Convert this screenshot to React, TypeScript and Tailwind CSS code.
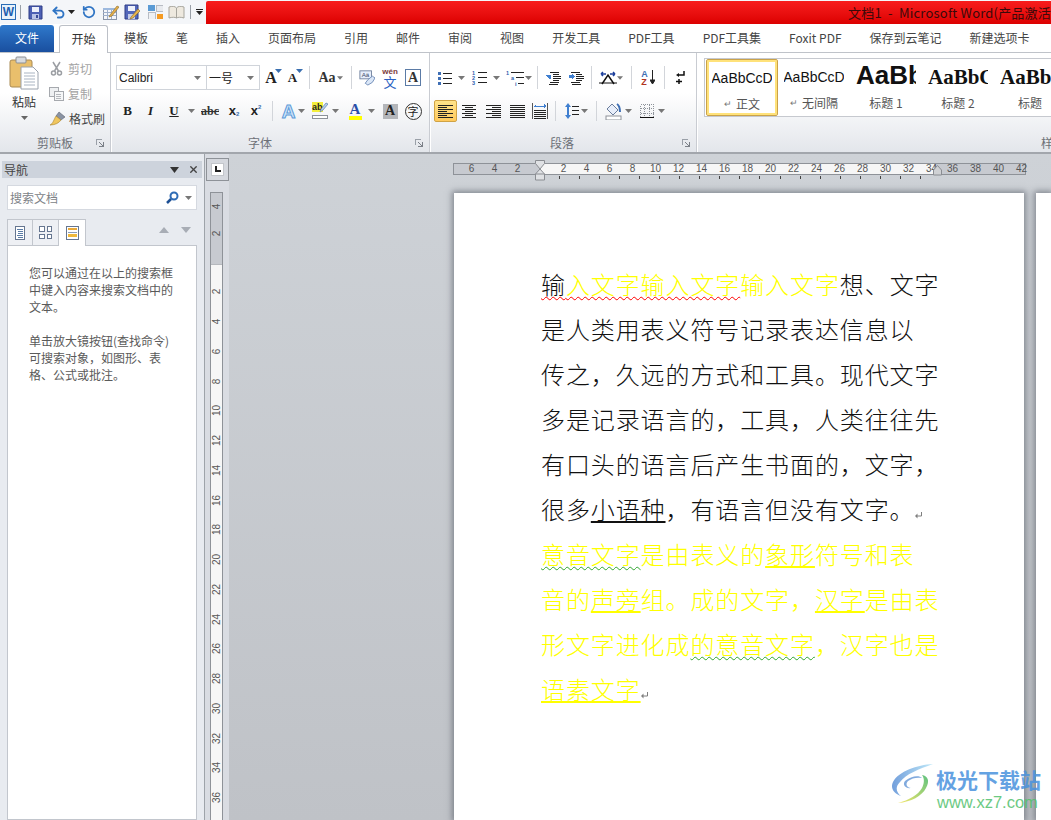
import React from 'react';
import { Undo2, RotateCcw, X } from 'lucide-react';

const CJK = "font-['Noto_Sans_CJK_SC','Liberation_Sans',sans-serif]";

const Caret = ({ c = '#666' }: { c?: string }) => (
  <svg width="7" height="4" viewBox="0 0 7 4"><path d="M0 0h7L3.5 4z" fill={c} /></svg>
);
const C = ({ w, children, className = '' }: { w: number; children?: React.ReactNode; className?: string }) => (
  <div style={{ width: w }} className={`flex h-full shrink-0 items-center justify-center ${className}`}>{children}</div>
);
const Sp = ({ w }: { w: number }) => <div style={{ width: w }} className="shrink-0" />;
const Sep = () => <div className="my-[1px] w-px shrink-0 bg-[#d2d5da]" />;

const Lines = ({ rows, c = '#222', w = 16, h = 15 }: { rows: number[][]; c?: string; w?: number; h?: number }) => (
  <svg width={w} height={h} viewBox={`0 0 ${w} ${h}`} shapeRendering="crispEdges">
    {rows.map((r, i) => <rect key={i} x={r[0]} y={r[1]} width={r[2]} height={1} fill={c} />)}
  </svg>
);

const Group = ({ w, label, children, labelClass = '' }: { w?: number; label: string; children: React.ReactNode; labelClass?: string }) => (
  <div style={w ? { width: w } : undefined} className="flex h-full shrink-0 flex-col border-r border-[#c9ccd2] shadow-[1px_0_0_#fff]">
    <div className="min-h-0 flex-1">{children}</div>
    <div className="flex h-[20px] items-center px-[6px] pt-[2px]">
      <div className={`flex-1 text-center text-[12px] leading-none text-[#6d7178] ${labelClass}`}>{label}</div>
      <svg width="8" height="8" viewBox="0 0 8 8" shapeRendering="crispEdges">
        <path d="M0 0h6v1H1v5H0z" fill="#9aa0a8" /><path d="M3 3h1v1h1v1h1v1h1V3h1v5H3V7h3V6H5V5H4V4H3z" fill="#7b8088" />
      </svg>
    </div>
  </div>
);

const QAT = () => (
  <div className="flex h-[24px] items-center bg-[#f4f6f9]">
    <Sp w={1} />
    <C w={15}>
      <div className="flex h-[16px] w-[15px] items-center justify-center border border-[#2a6cb6] bg-[#e8f2fb] font-['Liberation_Sans'] text-[12px] font-bold leading-none text-[#1e5fb0]">W</div>
    </C>
    <Sp w={4} /><div className="h-[14px] w-px bg-[#9aa0a8]" /><Sp w={7} />
    <C w={15}>
      <svg width="15" height="15" viewBox="0 0 15 15"><path d="M1 1h13v13H1z" fill="#4d60b4" stroke="#2f3d86" /><rect x="4" y="2" width="7" height="5" fill="#eef1fb" /><rect x="4" y="9" width="7" height="5" fill="#b9c3e6" /><rect x="8" y="10" width="2" height="3" fill="#3a4a96" /></svg>
    </C>
    <Sp w={7} />
    <C w={16}><Undo2 size={15} strokeWidth={3} color="#2f74c4" /></C>
    <C w={10}><Caret c="#222" /></C>
    <Sp w={5} />
    <C w={15}><RotateCcw size={14} strokeWidth={3} color="#2f74c4" /></C>
    <Sp w={6} />
    <C w={17}>
      <svg width="17" height="16" viewBox="0 0 17 16" shapeRendering="crispEdges"><rect x="1" y="4" width="13" height="11" fill="#f5f6fa" stroke="#8b95a8" /><path d="M1 8h13M1 11h13M5 4v11M9 4v11" stroke="#9fb0cc" /><rect x="1" y="4" width="13" height="2" fill="#9db9de" /><path d="M8 11l7-9 2 1-7 9-3 1z" fill="#e6b04a" stroke="#8a6a2a" strokeWidth=".6" shapeRendering="auto" /></svg>
    </C>
    <Sp w={5} />
    <C w={17}>
      <svg width="17" height="16" viewBox="0 0 17 16"><path d="M1 1h13v14H1z" fill="#5468ba" stroke="#2f3d86" /><rect x="4" y="2" width="7" height="5" fill="#eef1fb" /><rect x="4" y="10" width="7" height="5" fill="#c5cde8" /><path d="M7 13l7-8 2 2-7 7-3 1z" fill="#e8b44c" stroke="#8a6a2a" strokeWidth=".6" /></svg>
    </C>
    <Sp w={6} />
    <C w={16}>
      <svg width="15" height="14" viewBox="0 0 15 14" shapeRendering="crispEdges"><rect x="0" y="0" width="7" height="6" fill="#5b9bd5" /><rect x="8" y="0" width="7" height="6" fill="#e8eaee" stroke="#b8bcc4" /><rect x="0" y="7" width="7" height="7" fill="#eef0f3" stroke="#b8bcc4" /><rect x="9" y="9" width="6" height="5" fill="#f59b23" /></svg>
    </C>
    <Sp w={5} />
    <C w={17}>
      <svg width="17" height="13" viewBox="0 0 17 13"><path d="M1 1c3-1 6-1 7.500 1C10 0 13 0 16 1v11c-3-1-6-1-7.500 0C7 11 4 11 1 12z" fill="#eee9df" stroke="#a7a59d" /><path d="M8.500 2v10" stroke="#a7a59d" /></svg>
    </C>
    <Sp w={5} /><div className="h-[14px] w-px bg-[#9aa0a8]" /><Sp w={4} />
    <C w={8}><div className="flex flex-col items-center gap-[1px]"><div className="h-px w-[7px] bg-[#222]" /><Caret c="#222" /></div></C>
    <Sp w={3} />
    <div className="mt-px flex h-[23px] min-w-0 flex-1 items-center justify-end overflow-hidden rounded-tl-[2px] bg-gradient-to-b from-[#f81c1c] to-[#dc0000]">
      <div className={`w-[203px] shrink-0 whitespace-pre text-[13px] leading-none tracking-[0.2px] text-[#3a0a0a] ${CJK}`}>文档1  -  Microsoft Word(产品激活失败)</div>
    </div>
  </div>
);

const tabs = ['模板', '笔', '插入', '页面布局', '引用', '邮件', '审阅', '视图', '开发工具', 'PDF工具', 'PDF工具集', 'Foxit PDF', '保存到云笔记', '新建选项卡'];
const Tabs = () => (
  <div className={`flex h-[29px] items-end border-b border-[#bfc3c9] bg-white text-[12px] text-[#444] ${CJK}`}>
    <div className="flex h-[27px] w-[54px] items-center justify-center rounded-t-[3px] bg-gradient-to-b from-[#2f79cc] to-[#1a4f9f] pb-[2px] text-white">文件</div>
    <div className="ml-[5px] -mb-px flex h-[28px] w-[49px] items-center justify-center rounded-t-[3px] border border-b-0 border-[#bcc0c7] bg-white pb-[2px] text-[#333]">开始</div>
    <div className="flex h-full items-center pb-px">
      <Sp w={2} />
      {tabs.map((t) => <div key={t} className="whitespace-nowrap px-[14px]">{t}</div>)}
    </div>
  </div>
);

const Clipboard = () => (
  <div className={`flex h-full pt-[3px] text-[12px] ${CJK}`}>
    <div className="flex w-[47px] flex-col items-center pl-[1px] text-[#333]">
      <svg width="30" height="34" viewBox="0 0 30 34">
        <rect x="1" y="4" width="22" height="27" rx="2" fill="#e9bf6c" stroke="#a98a53" />
        <rect x="7" y="1" width="10" height="6" rx="1" fill="#d8dbdf" stroke="#8c8f94" />
        <path d="M12 11h12l5 5v17H12z" fill="#fff" stroke="#9aa2ad" />
        <path d="M15 17h11M15 20h11M15 23h11M15 26h11M15 29h11" stroke="#a9b4c2" />
      </svg>
      <div className="mt-[4px] leading-[16px]">粘贴</div>
      <div className="mt-[6px]"><Caret /></div>
    </div>
    <div className="flex flex-col pl-[2px]">
      <div className="flex h-[25px] items-center gap-[4px] text-[#a3a3a3]">
        <svg width="15" height="15" viewBox="0 0 15 15" fill="none" stroke="#9b9ea3" strokeWidth="1.500"><circle cx="4.500" cy="12" r="2" /><circle cx="10.500" cy="12" r="2" /><path d="M5.500 10L11 1M9.500 10L4 1" /></svg>
        <span>剪切</span>
      </div>
      <div className="flex h-[25px] items-center gap-[4px] text-[#a3a3a3]">
        <svg width="15" height="14" viewBox="0 0 15 14" shapeRendering="crispEdges"><rect x="0" y="0" width="9" height="9" fill="#eef0f2" stroke="#a6a9ae" /><rect x="5" y="4" width="9" height="9" fill="#f6f7f8" stroke="#a6a9ae" /><path d="M7 7h5M7 9h5M7 11h5" stroke="#b5b8bd" /></svg>
        <span>复制</span>
      </div>
      <div className="flex h-[25px] items-center gap-[3px] text-[#444]">
        <svg width="17" height="15" viewBox="0 0 17 15"><path d="M10 1l6 5-4 3-5-4z" fill="#8a93a3" stroke="#5a6270" strokeWidth=".6" /><path d="M7 5l5 4c-2 3-6 5-11 5 3-1 4-6 6-9z" fill="#f0c65e" stroke="#a68230" strokeWidth=".6" /></svg>
        <span>格式刷</span>
      </div>
    </div>
  </div>
);

const Serif = "font-['Liberation_Serif',serif]";
const FontGroup = () => (
  <div className="flex h-full flex-col pt-[12px]">
    <div className="flex h-[25px] pl-[5px]">
      <div className="flex h-full w-[91px] items-center justify-between border border-[#d0d4da] bg-white pl-[2px] pr-[5px] font-['Liberation_Sans'] text-[12px] text-[#222]">Calibri<Caret c="#777" /></div>
      <div className={`-ml-px flex h-full w-[54px] items-center justify-between border border-[#d0d4da] bg-white pl-[2px] pr-[5px] text-[12px] text-[#222] ${CJK}`}>一号<Caret c="#777" /></div>
      <C w={22}><div className={`${Serif} relative text-[16px] font-bold leading-none text-[#222]`}>A<span className="absolute right-[-5px] top-[-1px]"><Caret c="#3a6fb0" /></span></div></C>
      <C w={21}><div className={`${Serif} relative text-[13px] font-bold leading-none text-[#222]`}>A<span className="absolute right-[-6px] top-[-2px]"><Caret c="#3a6fb0" /></span></div></C>
      <Sp w={6} /><Sep /><Sp w={7} />
      <C w={20}><span className={`${Serif} text-[14px] font-bold leading-none text-[#333]`}>Aa</span></C>
      <C w={6}><Caret c="#777" /></C>
      <Sp w={8} /><Sep /><Sp w={7} />
      <C w={16}>
        <svg width="18" height="17" viewBox="0 0 18 17"><rect x="1" y="1" width="13" height="9" fill="#e7eefb" stroke="#6e7f9c" /><text x="3" y="8" fontSize="7" fontFamily="Liberation Sans" fill="#3a4a68">Aä</text><path d="M7 15l3-4 5-4 3 2-3 5-5 3z" fill="#dbe7f7" stroke="#6a87b4" /></svg>
      </C>
      <Sp w={7} />
      <C w={16}>
        <div className="flex w-[16px] flex-col items-center">
          <span className="font-['Liberation_Sans'] text-[8px] font-bold leading-[8px] text-[#7a3a3a]">wén</span>
          <span className={`text-[13px] leading-[12px] text-[#2a5fc2] ${CJK}`}>文</span>
        </div>
      </C>
      <Sp w={7} />
      <C w={16}><div className={`${Serif} flex h-[17px] w-[16px] items-center justify-center border border-[#5b7ba6] bg-white text-[14px] font-bold leading-none text-[#333]`}>A</div></C>
    </div>
    <div className="mt-[10px] flex h-[22px] pl-[5px]">
      <C w={23}><span className={`${Serif} text-[13px] font-bold text-[#222]`}>B</span></C>
      <C w={23}><span className={`${Serif} text-[13px] font-bold italic text-[#222]`}>I</span></C>
      <C w={24}><span className={`${Serif} text-[13px] font-bold text-[#222] underline`}>U</span></C>
      <C w={10}><Caret c="#777" /></C>
      <Sp w={2} />
      <C w={24}><span className={`${Serif} text-[12px] font-bold leading-none text-[#333] line-through`}>abc</span></C>
      <C w={24}>
        <div className="flex items-end"><span className="font-['Liberation_Sans'] text-[13px] font-bold leading-[14px] text-[#222]">x</span><span className="font-['Liberation_Sans'] text-[6px] font-bold leading-[7px] text-[#3a6fb0]">2</span></div>
      </C>
      <C w={20}>
        <div className="flex items-start"><span className="font-['Liberation_Sans'] text-[13px] font-bold leading-[14px] text-[#222]">x</span><span className="font-['Liberation_Sans'] text-[6px] font-bold leading-[7px] text-[#3a6fb0]">2</span></div>
      </C>
      <Sp w={6} /><Sep /><Sp w={7} />
      <C w={17}><span className="font-['Liberation_Sans'] text-[19px] font-bold leading-none text-[#cfe5fa] [-webkit-text-stroke:1px_#5c9ad8]">A</span></C>
      <C w={9}><Caret c="#777" /></C>
      <Sp w={6} />
      <C w={16}>
        <div className="relative flex h-[18px] w-[16px] flex-col">
          <span className="h-[10px] w-[11px] bg-[#f4ef3c] font-['Liberation_Sans'] text-[9px] font-bold leading-[10px] text-[#222]">ab</span>
          <svg className="absolute right-0 top-0" width="9" height="11" viewBox="0 0 9 11"><path d="M1 10l1-3 5-6 2 1-5 6z" fill="#b8cde9" stroke="#5a7fb0" strokeWidth=".7" /></svg>
          <div className="mt-[3px] h-[4px] w-full border border-[#8d9299] bg-white" />
        </div>
      </C>
      <C w={14}><Caret c="#777" /></C>
      <Sp w={5} />
      <C w={16}>
        <div className="flex flex-col items-center">
          <span className={`${Serif} text-[15px] font-bold leading-[13px] text-[#2a4fa8]`}>A</span>
          <div className="h-[4px] w-[13px] bg-[#ffff00]" />
        </div>
      </C>
      <C w={16}><Caret c="#777" /></C>
      <Sp w={1} />
      <C w={20}><div className={`${Serif} flex h-[15px] w-[15px] items-center justify-center bg-[#b4b6ba] text-[14px] font-bold leading-none text-[#222]`}>A</div></C>
      <Sp w={2} />
      <C w={22}><div className={`flex h-[17px] w-[17px] items-center justify-center rounded-full border border-[#333] text-[11px] leading-none text-[#222] ${CJK}`}>字</div></C>
    </div>
  </div>
);

const L = (c: number[]) => c;
const Paragraph = () => (
  <div className="flex h-full flex-col pt-[12px]">
    <div className="flex h-[25px] pl-[7px]">
      <C w={16}>
        <svg width="16" height="14" viewBox="0 0 16 14" shapeRendering="crispEdges"><path d="M1 1h3v3H1zM1 6h3v3H1zM1 11h3v3H1z" fill="#3f6fb5" /><path d="M6 2h9v1H6zM6 7h9v1H6zM6 12h9v1H6z" fill="#222" /></svg>
      </C>
      <Sp w={3} /><C w={10}><Caret c="#777" /></C><Sp w={6} />
      <C w={16}>
        <svg width="16" height="15" viewBox="0 0 16 15"><text x="0" y="5" fontSize="5.500" fontWeight="700" fill="#2f5fb0" fontFamily="Liberation Sans">1</text><text x="0" y="10" fontSize="5.500" fontWeight="700" fill="#2f5fb0" fontFamily="Liberation Sans">2</text><text x="0" y="15" fontSize="5.500" fontWeight="700" fill="#2f5fb0" fontFamily="Liberation Sans">3</text><path d="M6 2h9v1H6zM6 7h9v1H6zM6 12h9v1H6z" fill="#222" /></svg>
      </C>
      <Sp w={3} /><C w={10}><Caret c="#777" /></C><Sp w={4} />
      <C w={20}>
        <svg width="19" height="16" viewBox="0 0 19 16"><text x="0" y="5" fontSize="5.500" fontWeight="700" fill="#2f5fb0" fontFamily="Liberation Sans">1</text><text x="5" y="10" fontSize="5.500" fontWeight="700" fill="#2f5fb0" fontFamily="Liberation Sans">a</text><text x="9" y="16" fontSize="5.500" fontWeight="700" fill="#2f5fb0" fontFamily="Liberation Sans">i</text><path d="M5 2h13v1H5zM10 7h8v1h-8zM12 13h6v1h-6z" fill="#222" /></svg>
      </C>
      <C w={7}><Caret c="#777" /></C><Sp w={5} /><Sep /><Sp w={8} />
      <C w={16}>
        <svg width="16" height="14" viewBox="0 0 16 14" shapeRendering="crispEdges"><path d="M4 1h9v1H4zM7 3h6v1H7zM7 5h8v1H7zM7 7h8v1H7zM7 9h6v1H7zM4 11h9v1H4zM3 13h9v1H3z" fill="#222" /><path d="M5 5H0v1h1v1h1v1h1v1h2z" fill="#3f7fd0" transform="translate(0 -1)" /></svg>
      </C>
      <Sp w={7} />
      <C w={16}>
        <svg width="16" height="14" viewBox="0 0 16 14" shapeRendering="crispEdges"><path d="M2 1h9v1H2zM7 3h6v1H7zM7 5h8v1H7zM7 7h8v1H7zM7 9h6v1H7zM2 11h9v1H2zM3 13h9v1H3z" fill="#222" /><path d="M0 4h3V3h1v1h1v1h1v1H5v1H4v1H3V7H0z" fill="#3f7fd0" /></svg>
      </C>
      <Sp w={6} /><Sep /><Sp w={7} />
      <C w={18}>
        <svg width="18" height="14" viewBox="0 0 18 14"><path d="M3 13L9 4l6 9" fill="none" stroke="#111" strokeWidth="1.500" /><path d="M0 12h18" stroke="#111" /><path d="M7 3H2M2 3l2-2M2 3l2 2M11 3h5M16 3l-2-2M16 3l-2 2" stroke="#1c3f9c" strokeWidth="1.500" fill="none" /></svg>
      </C>
      <C w={6}><Caret c="#777" /></C><Sp w={8} /><Sep /><Sp w={8} />
      <C w={16}>
        <div className="flex items-center gap-[2px]">
          <div className="flex flex-col font-['Liberation_Sans'] text-[9px] font-bold leading-[8px]"><span className="text-[#3f6fb5]">A</span><span className="text-[#b0341e]">Z</span></div>
          <svg width="5" height="15" viewBox="0 0 5 15"><path d="M2.500 0v13M0 10l2.500 4L5 10z" stroke="#222" fill="#222" /></svg>
        </div>
      </C>
      <Sp w={8} /><Sep /><Sp w={7} />
      <C w={16}>
        <svg width="10" height="14" viewBox="0 0 10 14"><path d="M9 0v4H3" stroke="#111" strokeWidth="1.500" fill="none" /><path d="M4 2L1 4l3 2z" fill="#111" /><path d="M4 8v5M1 10.500h6" stroke="#111" strokeWidth="1.500" /></svg>
      </C>
    </div>
    <div className="mt-[10px] flex h-[22px] pl-[4px]">
      <C w={23} className="rounded-[2px] border border-[#d0a345] bg-gradient-to-b from-[#ffe38a] to-[#ffc95b]">
        <Lines rows={[L([0, 0, 15]), L([0, 2, 9]), L([0, 4, 15]), L([0, 6, 9]), L([0, 8, 15]), L([0, 10, 9]), L([0, 12, 15])]} h={13} />
      </C>
      <Sp w={3} />
      <C w={18}><Lines rows={[L([1, 0, 14]), L([4, 2, 8]), L([1, 4, 14]), L([4, 6, 8]), L([1, 8, 14]), L([4, 10, 8]), L([1, 12, 14])]} h={13} /></C>
      <Sp w={6} />
      <C w={18}><Lines rows={[L([1, 0, 15]), L([7, 2, 9]), L([1, 4, 15]), L([7, 6, 9]), L([1, 8, 15]), L([7, 10, 9]), L([1, 12, 15])]} h={13} /></C>
      <Sp w={6} />
      <C w={18}><Lines rows={[L([1, 0, 15]), L([1, 2, 15]), L([1, 4, 15]), L([1, 6, 15]), L([1, 8, 15]), L([1, 10, 15]), L([1, 12, 15])]} h={13} /></C>
      <Sp w={5} />
      <C w={18}>
        <svg width="16" height="16" viewBox="0 0 16 16" shapeRendering="crispEdges"><path d="M0 0h1v16H0zM15 0h1v16h-1z" fill="#555" /><path d="M2 3h12v1H2z" fill="#3f7fd0" /><path d="M2 3l2-2v4zM14 3l-2-2v4z" fill="#3f7fd0" /><path d="M2 7h12v1H2zM2 9h12v1H2zM2 11h12v1H2zM2 13h12v1H2zM2 15h12v1H2z" fill="#222" /></svg>
      </C>
      <Sp w={6} /><Sep /><Sp w={8} />
      <C w={16}>
        <svg width="14" height="16" viewBox="0 0 14 16"><path d="M3 0l3 4H4v8h2l-3 4-3-4h2V4H0z" fill="#3f7fd0" /><path d="M7 3h7v1H7zM7 7h7v1H7zM7 11h7v1H7z" fill="#222" /></svg>
      </C>
      <C w={8}><Caret c="#777" /></C><Sp w={8} /><Sep /><Sp w={7} />
      <C w={18}>
        <svg width="17" height="17" viewBox="0 0 17 17"><path d="M7 1l6 6-5 5-6-6z" fill="#e8eefa" stroke="#6a7d9c" /><path d="M12 1c3 2 3 6 3 8" stroke="#3f6fb5" strokeWidth="2" fill="none" /><rect x="1" y="13" width="15" height="4" fill="#fff" stroke="#8d9299" /></svg>
      </C>
      <C w={12}><Caret c="#777" /></C><Sp w={4} />
      <C w={18}>
        <svg width="14" height="14" viewBox="0 0 14 14" shapeRendering="crispEdges"><path d="M0.500 0.500h13v13h-13zM0.500 4.500h13M0.500 9h13M4.500 0.500v13M9 .5v13" fill="none" stroke="#8e939a" strokeDasharray="1 1" /><path d="M0 13.500h14" stroke="#111" /></svg>
      </C>
      <C w={10}><Caret c="#777" /></C>
    </div>
  </div>
);

const StyleItem = ({ sample, label, selected, mark, w = 72 }: { sample: React.ReactNode; label: string; selected?: boolean; mark?: boolean; w?: number }) => (
  <div style={{ width: w }} className={`flex h-[57px] shrink-0 flex-col items-center overflow-hidden rounded-[2px] ${selected ? 'border border-[#c9a24a] shadow-[inset_0_0_0_2px_#ffe27a]' : ''}`}>
    <div className="flex h-[36px] w-[60px] items-end justify-center overflow-hidden whitespace-nowrap pb-[5px]">{sample}</div>
    <div className={`flex items-center gap-[4px] whitespace-nowrap text-[12px] leading-[16px] text-[#555] ${CJK}`}>
      {mark && <span className="text-[9px] text-[#777]">↵</span>}{label}
    </div>
  </div>
);

const Styles = () => (
  <div className="flex h-full min-w-0 flex-1 flex-col">
    <div className="ml-[7px] mt-[5px] flex h-[59px] items-center overflow-hidden border-y border-l border-[#c6c9cf] bg-white pl-px">
      <StyleItem selected mark label="正文" sample={<span className="font-['Liberation_Sans'] text-[14px] leading-[26px] text-[#111]">AaBbCcD</span>} />
      <StyleItem mark label="无间隔" sample={<span className="font-['Liberation_Sans'] text-[14px] leading-[26px] text-[#111]">AaBbCcD</span>} />
      <StyleItem label="标题 1" sample={<span className="w-full overflow-hidden font-['Liberation_Sans'] text-[26px] font-bold leading-[30px] text-[#111]">AaBb</span>} />
      <StyleItem label="标题 2" sample={<span className="w-full overflow-hidden font-['Liberation_Serif'] text-[21px] font-bold leading-[26px] text-[#111]">AaBbC</span>} />
      <StyleItem label="标题" sample={<span className="w-full overflow-hidden font-['Liberation_Serif'] text-[21px] font-bold leading-[26px] text-[#111]">AaBbC</span>} />
    </div>
    <div className={`mt-auto flex h-[20px] items-center justify-end pt-[2px] text-[12px] leading-none text-[#6d7178] ${CJK}`}><span className="w-[10px] overflow-hidden whitespace-nowrap">样式</span></div>
  </div>
);

const Ribbon = () => (
  <div className={`flex h-[101px] border-b-2 border-[#a2a6ac] bg-gradient-to-b from-white from-40% to-[#e3e6eb] ${CJK}`}>
    <Group w={111} label="剪贴板" labelClass="pl-[8px]"><Clipboard /></Group>
    <Group w={319} label="字体" labelClass="pr-[12px]"><FontGroup /></Group>
    <Group w={267} label="段落" labelClass="pl-[6px]"><Paragraph /></Group>
    <Styles />
  </div>
);

const Nav = () => (
  <div className={`flex h-full w-[205px] shrink-0 flex-col border-r border-[#9ea3a9] bg-[#e8ebf0] pt-[7px] ${CJK}`}>
    <div className="mx-[2px] flex h-[17px] items-center bg-[#cdd3dc] pl-[2px] pr-[3px] text-[12px] text-[#444]">
      <span className="flex-1">导航</span>
      <svg width="9" height="6" viewBox="0 0 9 6" className="mr-[9px]"><path d="M0 0h9L4.500 6z" fill="#333" /></svg>
      <X size={11} strokeWidth={3} color="#444" />
    </div>
    <div className="mx-[7px] mt-[7px] flex h-[25px] w-[190px] items-center border border-[#d5d9e0] bg-white pl-[2px] pr-[4px] text-[12px] text-[#808388]">
      <span className="flex-1">搜索文档</span>
      <svg width="13" height="13" viewBox="0 0 13 13" className="mr-[6px]" fill="none"><circle cx="8" cy="5" r="3.500" stroke="#2f6cb5" strokeWidth="2" /><path d="M5 8l-4 4" stroke="#1d4f94" strokeWidth="2.500" /></svg>
      <Caret c="#777" />
    </div>
    <div className="mx-[7px] mt-[9px] flex h-[26px] w-[190px] items-end">
      <div className="flex h-full w-[26px] items-center justify-center border border-b-0 border-[#c2c6cd] bg-[#eef0f4]">
        <svg width="10" height="14" viewBox="0 0 10 14" shapeRendering="crispEdges"><rect x=".5" y=".5" width="9" height="13" fill="#fff" stroke="#667690" /><path d="M2 3h6M3 5h5M3 7h5M2 9h6M3 11h5" stroke="#5b7ca6" /></svg>
      </div>
      <div className="-ml-px flex h-full w-[27px] items-center justify-center border border-b-0 border-[#c2c6cd] bg-[#eef0f4]">
        <svg width="13" height="13" viewBox="0 0 13 13" shapeRendering="crispEdges"><path d="M.5.5h4.500v5H.5zM8 .5h4.500v5H8zM.5 8h4.500v4.500H.5zM8 8h4.500v4.500H8z" fill="#fff" stroke="#667690" /></svg>
      </div>
      <div className="-ml-px -mb-px z-10 flex h-[27px] w-[28px] items-center justify-center border border-b-0 border-[#c2c6cd] bg-white">
        <svg width="13" height="14" viewBox="0 0 13 14" shapeRendering="crispEdges"><rect x=".5" y=".5" width="12" height="13" fill="#fff" stroke="#667690" /><rect x="2" y="2" width="9" height="2" fill="#e8a93a" /><rect x="2" y="6" width="9" height="1" fill="#8b9bb4" /><rect x="2" y="8" width="9" height="3" fill="#f0b93c" /></svg>
      </div>
      <div className="flex h-full flex-1 items-center justify-end gap-[12px] pb-[4px] pr-[6px]">
        <svg width="10" height="6" viewBox="0 0 10 6"><path d="M0 6h10L5 0z" fill="#a8adb5" /></svg>
        <svg width="10" height="6" viewBox="0 0 10 6"><path d="M0 0h10L5 6z" fill="#a8adb5" /></svg>
      </div>
    </div>
    <div className="mx-[7px] w-[190px] flex-1 border border-[#c2c6cd] bg-white pl-[21px] pr-[16px] pt-[18px] text-[12px] leading-[17px] text-[#5a5a5a]">
      <div>您可以通过在以上的搜索框中键入内容来搜索文档中的文本。</div>
      <div className="mt-[17px]">单击放大镜按钮(查找命令)可搜索对象，如图形、表格、公式或批注。</div>
    </div>
  </div>
);

const vGrey = [4, 2];
const vWhite = [2, 4, 6, 8, 10, 12, 14, 16, 18, 20, 22, 24, 26, 28, 30, 32, 34, 36];
const VRuler = () => (
  <div className="flex h-full w-[24px] shrink-0 flex-col items-start bg-[#d9dce2] font-['Liberation_Sans'] text-[10px] text-[#555]">
    <div className="ml-px mt-[4px] flex h-[23px] w-[23px] items-center justify-center border border-[#8e9298] bg-[#d5d8de]">
      <div className="flex h-[13px] w-[13px] items-center justify-center border border-[#c3c6cb] bg-white">
        <div className="mb-[1px] ml-[1px] h-[6px] w-[6px] border-b-2 border-l-2 border-[#222]" />
      </div>
    </div>
    <div className="ml-[5px] mt-[11px] flex w-[13px] flex-1 flex-col border-x border-t border-[#8e9298] bg-[#f6f6f6]">
      <div className="flex h-[72px] shrink-0 flex-col justify-end border-b border-[#b5b8bd] bg-[#c7cad0] pb-[17px]">
        {vGrey.map((n) => <div key={n} className="flex h-[30px] items-center justify-center"><span className="-rotate-90">{n}</span></div>)}
      </div>
      <div className="pt-[12px]">
        {vWhite.map((n) => <div key={n} className="flex h-[29.76px] items-center justify-center"><span className="-rotate-90 whitespace-nowrap">{n}</span></div>)}
      </div>
    </div>
  </div>
);

const N = ({ n }: { n: number }) => <div className="flex w-[23px] shrink-0 items-center justify-center">{n}</div>;
const ticks = Array.from({ length: 19 }, (_, i) => i);
const HRuler = () => (
  <div className="relative ml-[224px] mt-[9px] w-[573px] shrink-0 font-['Liberation_Sans'] text-[10px] leading-none text-[#555]">
    <div className="flex h-[12px] border border-[#8e9298] bg-[#c7cad0]">
      <div className="flex w-[86px] shrink-0 items-center justify-end pr-[11px]"><N n={6} /><N n={4} /><N n={2} /></div>
      <div className="flex w-[394px] shrink-0 items-center bg-[#f6f6f6] pl-[12px]">
        {[2, 4, 6, 8, 10, 12, 14, 16, 18, 20, 22, 24, 26, 28, 30, 32, 34].map((n) => <N key={n} n={n} />)}
      </div>
      <div className="flex items-center pl-[7px]">{[36, 38, 40, 42].map((n) => <N key={n} n={n} />)}</div>
    </div>
    <div className="flex h-[7px] items-start pl-[106px] pt-[1px]">
      {ticks.map((t) => <div key={t} className="mr-[19.050px] h-[3px] w-px shrink-0 bg-[#444]" />)}
    </div>
    <svg className="absolute left-[82px] top-[-3px]" width="10" height="21" viewBox="0 0 10 21">
      <path d="M.5.5h9v3L5 9 .5 3.500z" fill="#dfe1e4" stroke="#8a8d92" />
      <path d="M5 9l4.500 5v6h-9v-6z" fill="#dfe1e4" stroke="#8a8d92" />
      <path d="M.5 14h9" stroke="#8a8d92" />
    </svg>
    <svg className="absolute left-[480px] top-[2px]" width="9" height="11" viewBox="0 0 9 11">
      <path d="M4.500.5L8.500 5v5h-8V5z" fill="#cfd1d4" stroke="#8a8d92" />
    </svg>
  </div>
);

const Y = 'text-[#ffff00]';
const Squig = ({ c, children }: { c: string; children: React.ReactNode }) => (
  <span className={`underline decoration-wavy decoration-1 underline-offset-[2px] ${c}`}>{children}</span>
);
const U = ({ children, c }: { children: React.ReactNode; c: string }) => (
  <span className={`underline decoration-[1.500px] underline-offset-[2px] ${c}`}>{children}</span>
);
const Mark = () => (
  <svg width="9" height="9" viewBox="0 0 9 9" className="-ml-[1px] inline-block align-[-1px]"><path d="M7.500 1v4H2" stroke="#7f7f7f" fill="none" /><path d="M3.500 2.500L1 5l2.500 2.500z" fill="#7f7f7f" /></svg>
);

const Document = () => (
  <div className={`whitespace-nowrap pl-[87px] pt-[68px] text-[24px] font-light leading-[45px] tracking-[0.9px] text-[#111] ${CJK}`}>
    <div><Squig c="decoration-[#f00]">输<span className={Y}>入文字输入文字</span></Squig><span className={Y}>输入文字</span>想、文字</div>
    <div>是人类用表义符号记录表达信息以</div>
    <div>传之，久远的方式和工具。现代文字</div>
    <div>多是记录语言的，工具，人类往往先</div>
    <div>有口头的语言后产生书面的，文字，</div>
    <div>很多<U c="decoration-[#111]">小语种</U>，有语言但没有文字。<Mark /></div>
    <div className={Y}><Squig c="decoration-[#2ea52e]">意音文字</Squig>是由表义的<U c="decoration-[#ffff00]">象形</U>符号和表</div>
    <div className={Y}>音的<U c="decoration-[#ffff00]">声旁</U>组。成的文字，<U c="decoration-[#ffff00]">汉字</U>是由表</div>
    <div className={Y}>形文字进化成<Squig c="decoration-[#2ea52e]">的意音文字</Squig>，汉字也是</div>
    <div className={Y}><U c="decoration-[#ffff00]">语素文字</U><Mark /></div>
  </div>
);

const Watermark = () => (
  <div className="absolute bottom-[8px] right-[10px] flex items-start opacity-85">
    <svg width="44" height="42" viewBox="0 0 44 42">
      <defs>
        <linearGradient id="wmb" x1="0" y1="0" x2="1" y2="0"><stop offset="0" stopColor="#5b8fd6" /><stop offset="1" stopColor="#b5e6f8" /></linearGradient>
        <linearGradient id="wmg" x1="0" y1="1" x2="1" y2="0"><stop offset="0" stopColor="#f4e34f" /><stop offset="1" stopColor="#44b86a" /></linearGradient>
      </defs>
      <path d="M42 1C26 2 8 8 2 19c-3 6 1 12 8 14-5-4-6-9-1-14C15 11 28 6 42 1z" fill="url(#wmb)" />
      <path d="M14 18c6-5 14-6 17-3-5-1-10 0-14 3-3 3-1 7 3 7-5 1-9-3-6-7z" fill="#6a9bd8" />
      <path d="M31 12c6 1 8 6 4 13-4 8-15 14-28 15 11-3 20-8 24-15 2-4 3-9 0-13z" fill="url(#wmg)" />
    </svg>
    <div className="ml-px flex flex-col">
      <div className={`mt-[3px] text-[21px] font-bold leading-[26px] text-[#4a92de] ${CJK}`}>极光下载站</div>
      <div className="pl-px font-['Liberation_Sans'] text-[16.500px] leading-[20px] text-[#52c16d]">www.xz7.com</div>
    </div>
  </div>
);

export default function App() {
  return (
    <div className="relative h-[820px] w-[1051px] overflow-hidden bg-[#c8ccd2]">
      <QAT />
      <Tabs />
      <Ribbon />
      <div className="flex h-[666px]">
        <Nav />
        <VRuler />
        <div className="flex min-w-0 flex-1 flex-col overflow-hidden bg-gradient-to-b from-[#ced2d7] to-[#bfc2c7]">
          <HRuler />
          <div className="ml-[225px] mt-[11px] flex flex-1 gap-[12px]">
            <div className="w-[570px] shrink-0 bg-white shadow-[0_0_6px_2px_rgba(70,75,85,0.55)]"><Document /></div>
            <div className="flex-1 bg-white shadow-[0_0_6px_2px_rgba(70,75,85,0.55)]" />
          </div>
        </div>
      </div>
      <Watermark />
    </div>
  );
}
